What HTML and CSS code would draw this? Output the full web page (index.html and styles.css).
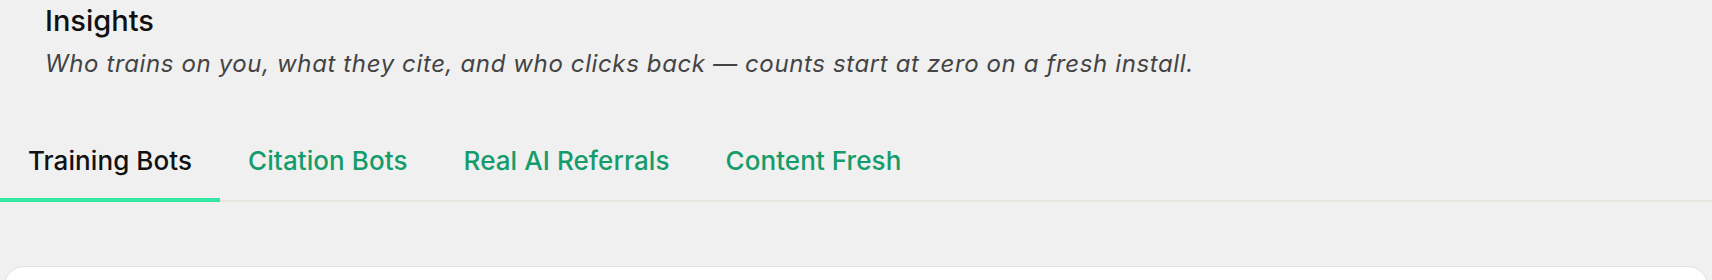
FILE: index.html
```html
<!DOCTYPE html>
<html lang="en">
<head>
    <meta charset="UTF-8">
    <meta name="viewport" content="width=device-width, initial-scale=1.0">
    <title>Insights</title>
    <link rel="stylesheet" href="styles.css">
</head>
<body>

    <div id="page-header">
        <h1>Insights</h1>
        <p>Who trains on you, what they cite, and who clicks back — counts start at zero on a fresh install.</p>
    </div>

    <div class="tab-bar">
        <a class="tab active" href="#training">Training Bots</a>
        <a class="tab" href="#citation">Citation Bots</a>
        <a class="tab" href="#referrals">Real AI Referrals</a>
        <a class="tab" href="#fresh">Content Fresh</a>
    </div>

    <div class="panel"></div>

</body>
</html>
```

FILE: styles.css
```css
body {
    margin: 0;
    background-color: #f0f0f0;
    font-family: 'Inter', 'Liberation Sans', sans-serif;
    color: #111;
}

#page-header {
    padding: 4px 45px 0;
}

#page-header h1 {
    margin: 0;
    font-size: 29px;
    line-height: 34px;
    font-weight: 500;
}

#page-header p {
    margin: 11px 0 0;
    font-size: 24px;
    line-height: 30px;
    letter-spacing: 0.62px;
    font-style: italic;
    color: #444;
}

.tab-bar {
    display: flex;
    margin-top: 42px;
    border-bottom: 2px solid #e6e6e1;
}

.tab {
    padding: 24px 28px 21px;
    margin-bottom: -2px;
    border-bottom: 4px solid transparent;
    font-size: 26px;
    line-height: 32px;
    letter-spacing: 0.08px;
    font-weight: 500;
    color: #159c6b;
    text-decoration: none;
}

.tab.active {
    color: #111;
    border-bottom-color: #33e6a4;
}

.panel {
    margin: 64px 4px 0;
    height: 60px;
    background-color: #fff;
    border: 1px solid #e2e2dc;
    border-radius: 20px;
}
```
